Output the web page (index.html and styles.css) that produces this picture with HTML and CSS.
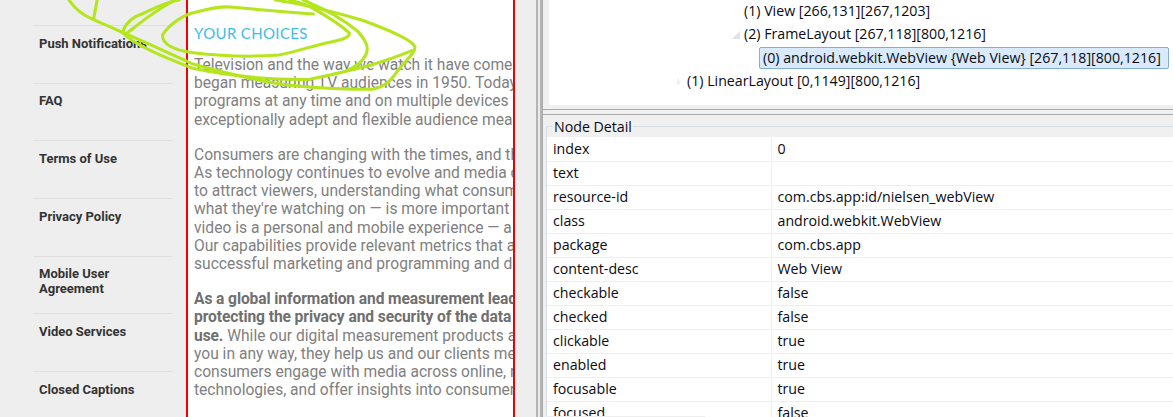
FILE: index.html
```html
<!DOCTYPE html>
<html lang="en">
<head>
<meta charset="utf-8">
<title>UI Automator Viewer</title>
<link rel="stylesheet" href="styles.css">
</head>
<body>
<div class="screen">
  <section class="device">
    <nav class="menu">
      <div class="menu-item">Push Notifications</div>
      <div class="menu-item">FAQ</div>
      <div class="menu-item">Terms of Use</div>
      <div class="menu-item">Privacy Policy</div>
      <div class="menu-item">Mobile User<br>Agreement</div>
      <div class="menu-item">Video Services</div>
      <div class="menu-item">Closed Captions</div>
    </nav>
    <article class="webview">
      <h2 class="heading">YOUR CHOICES</h2>
      <p class="para">Television and the way we watch it have come<br>began measuring TV audiences in 1950. Today<br>programs at any time and on multiple devices<br>exceptionally adept and flexible audience mea</p>
      <p class="para">Consumers are changing with the times, and th<br>As technology continues to evolve and media c<br>to attract viewers, understanding what consum<br>what they're watching on — is more important<br>video is a personal and mobile experience — a<br>Our capabilities provide relevant metrics that a<br>successful marketing and programming and d</p>
      <p class="para"><strong>As a global information and measurement lead<br>protecting the privacy and security of the data<br>use.</strong> While our digital measurement products a<br>you in any way, they help us and our clients me<br>consumers engage with media across online, r<br>technologies, and offer insights into consumer</p>
    </article>
    <svg class="scribble" viewBox="0 0 1568 630" preserveAspectRatio="none" aria-hidden="true">
      <g fill="none" stroke="#b5e61d" stroke-width="9" stroke-linecap="round" stroke-linejoin="round">
        <path d="M200 0C220 30 250 50 270 58C300 72 330 85 350 95C420 125 490 160 560 192C640 215 720 235 800 250C880 262 1000 268 1080 268C1120 262 1140 235 1160 205C1180 180 1205 160 1205 140C1195 118 1130 90 1050 60C1000 45 900 15 800 0"/>
        <path d="M520 0C480 5 440 30 400 47C375 58 355 85 358 100C385 130 470 170 560 205C650 225 760 240 900 238C1000 215 1100 195 1195 152"/>
        <path d="M368 100C400 75 450 30 510 0"/>
        <path d="M282 0L272 56"/>
        <path d="M910 42C860 38 760 30 680 22C640 16 600 28 570 36C530 44 490 75 472 105C470 130 500 150 560 158C640 168 720 172 810 165C860 155 900 140 950 128C990 122 1015 112 1015 100C1000 85 960 55 900 20C880 10 860 5 840 0"/>
        <path d="M880 0C940 25 1000 60 1040 95C1065 125 1072 145 1062 165C1050 190 1025 205 1000 215"/>
      </g>
    </svg>
  </section>
  <div class="sash"></div>
  <section class="inspector">
    <div class="tree">
      <div class="tree-row indent-2">(1) View [266,131][267,1203]</div>
      <div class="tree-row indent-2"><span class="twist open"></span>(2) FrameLayout [267,118][800,1216]</div>
      <div class="tree-row indent-3"><span class="selected">(0) android.webkit.WebView {Web View} [267,118][800,1216]</span></div>
      <div class="tree-row indent-1"><span class="twist closed"></span>(1) LinearLayout [0,1149][800,1216]</div>
    </div>
    <div class="split"></div>
    <fieldset class="detail">
      <legend class="legend">Node Detail</legend>
      <table class="props">
        <tr><td>index</td><td>0</td></tr>
        <tr><td>text</td><td></td></tr>
        <tr><td>resource-id</td><td>com.cbs.app:id/nielsen_webView</td></tr>
        <tr><td>class</td><td>android.webkit.WebView</td></tr>
        <tr><td>package</td><td>com.cbs.app</td></tr>
        <tr><td>content-desc</td><td>Web View</td></tr>
        <tr><td>checkable</td><td>false</td></tr>
        <tr><td>checked</td><td>false</td></tr>
        <tr><td>clickable</td><td>true</td></tr>
        <tr><td>enabled</td><td>true</td></tr>
        <tr><td>focusable</td><td>true</td></tr>
        <tr><td>focused</td><td>false</td></tr>
      </table>
    </fieldset>
    <div class="edge"></div>
  </section>
</div>
</body>
</html>
```
FILE: styles.css
```css
* { box-sizing: border-box; }
html, body { margin: 0; height: 100%; }
body { overflow: hidden; background: #f0f0f0; }
.screen { display: flex; width: 1173px; height: 417px; overflow: hidden; }

.device { position: relative; flex: 0 0 536px; display: flex; background: #eeeeee; overflow: hidden; }
.menu { flex: 0 0 186px; padding: 25px 14px 0 33px; font: 700 13px/15px Roboto, sans-serif; color: #333333; }
.menu-item { height: 57.7px; padding: 9.6px 0 0 6px; border-top: 1px solid #dfdfdf; }
.webview { flex: 0 0 329px; height: 417px; padding: 0 0 0 6px; background: #ffffff; border-left: 2px solid #f00000; border-right: 2px solid #f00000; overflow: hidden; font: 400 15.6px/18.2px Roboto, sans-serif; color: #808080; }
.heading { margin: 23px 0 13px; font: 400 15px/20px Lato, sans-serif; letter-spacing: .35px; color: #3dbdea; white-space: nowrap; }
.para { margin: 0 0 17px; white-space: nowrap; }
.para strong { font-weight: 700; color: #6f6f6f; letter-spacing: -.1px; }
.scribble { position: absolute; left: 0; top: 0; width: 540px; height: 210px; }

.sash { flex: 0 0 7px; background: linear-gradient(90deg, #b4b4b4 0 2px, #ececec 2px 4px, #b4b4b4 4px 6px, #a9a9a9 6px 7px); }
.inspector { position: relative; flex: 1; min-width: 0; display: flex; flex-direction: column; font: 400 14.2px/22px "Open Sans", sans-serif; color: #0a0a14; }
.tree { flex: 0 0 105px; margin-left: 6px; background: #ffffff; white-space: nowrap; }
.tree-row { position: relative; height: 23.33px; }
.indent-1 { padding-left: 138px; }
.indent-2 { padding-left: 195px; }
.indent-3 { padding-left: 210px; }
.twist { position: absolute; top: 8px; width: 0; height: 0; }
.twist.open { left: 183px; border: 4px solid transparent; border-right-color: #e2e2e2; border-bottom-color: #e2e2e2; }
.twist.closed { left: 128px; border: 4px solid transparent; border-left-color: #f0f0f0; }
.selected { display: block; width: 410px; height: 22px; padding-left: 3px; line-height: 20px; background: #d8eafb; border: 1px solid #84acdd; border-radius: 2px; }
.split { flex: 0 0 10px; background: linear-gradient(180deg, #f0f0f0 0 4px, #a9a9a9 4px 5px, #f0f0f0 5px 9px, #a9a9a9 9px 10px); }
.detail { flex: 1; min-height: 0; margin: 0 0 0 3px; padding: 0; min-width: 0; border: 0; border-top: 1px solid #d5dfe5; border-left: 1px solid #d5dfe5; background: #f0f0f0; overflow: hidden; }
.legend { margin-left: 6px; padding: 3px 1px 2px; font-size: 14.2px; line-height: 17px; }
.props { width: 100%; border-collapse: collapse; table-layout: fixed; background: #ffffff; }
.props td { height: 24px; padding: 0 6px; border-bottom: 1px solid #eeeef3; white-space: nowrap; }
.props td:first-child { width: 224px; border-right: 1px solid #eeeef3; }
.edge { position: absolute; left: 3px; bottom: 0; width: 159px; height: 1px; background: #eeeeee; }
```
